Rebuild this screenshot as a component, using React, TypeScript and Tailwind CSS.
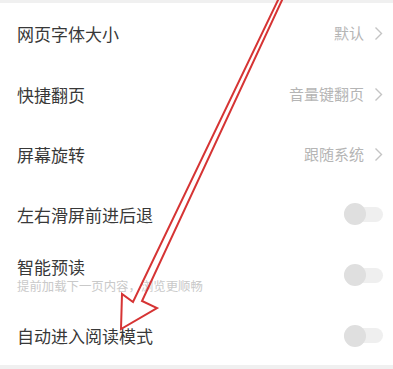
import React from "react";

type Row =
  | { kind: "link"; title: string; value: string; h: string }
  | { kind: "toggle"; title: string; sub?: string; h: string };

const rows: Row[] = [
  { kind: "link", title: "网页字体大小", value: "默认", h: "h-[60px]" },
  { kind: "link", title: "快捷翻页", value: "音量键翻页", h: "h-[62px]" },
  { kind: "link", title: "屏幕旋转", value: "跟随系统", h: "h-[59px]" },
  { kind: "toggle", title: "左右滑屏前进后退", h: "h-[60px]" },
  { kind: "toggle", title: "智能预读", sub: "提前加载下一页内容，浏览更顺畅", h: "h-[62px]" },
  { kind: "toggle", title: "自动进入阅读模式", h: "h-[59px]" },
];

function Chevron() {
  return (
    <svg width="9" height="15" viewBox="0 0 9 15" className="ml-[10px]">
      <path d="M1.5 1.5 L7.5 7.5 L1.5 13.5" fill="none" stroke="#c4c4c4" strokeWidth="1.4" />
    </svg>
  );
}

function Toggle() {
  return (
    <div className="relative w-[39px] h-[22px] flex items-center">
      <div className="w-[39px] h-[15px] rounded-full bg-[#efefef]" />
      <div className="absolute left-0 top-0 w-[22px] h-[22px] rounded-full bg-[#dfdfdf]" />
    </div>
  );
}

export default function App() {
  return (
    <div
      className="relative w-[393px] h-[369px] bg-white overflow-hidden"
      style={{ fontFamily: '"Noto Sans CJK SC", "Noto Sans", sans-serif' }}
    >
      <div className="h-[3px] bg-[#f0f0f0]" />
      {rows.map((r) => (
        <div key={r.title} className={`${r.h} flex items-center justify-between pl-[17px] pr-[10px]`}>
          <div className="flex flex-col">
            <span className="text-[17px] leading-[21px] text-[#383838]">{r.title}</span>
            {r.kind === "toggle" && r.sub && (
              <span className="text-[12.4px] leading-[16px] mt-[1px] text-[#c9c9c9]">{r.sub}</span>
            )}
          </div>
          {r.kind === "link" ? (
            <div className="flex items-center">
              <span className="text-[15px] text-[#b5b5b5]">{r.value}</span>
              <Chevron />
            </div>
          ) : (
            <Toggle />
          )}
        </div>
      ))}
      <div className="absolute bottom-0 left-0 right-0 h-[4px] bg-[#f0f0f0]" />

      <svg className="absolute inset-0 pointer-events-none" width="393" height="369" viewBox="0 0 393 369">
        <path
          d="M279 -2 L283 -2 L142 301 L157 308 L121 329 L122 294 L133 302 Z"
          fill="none"
          stroke="#d63434"
          strokeWidth="2"
          strokeLinejoin="miter"
        />
      </svg>
    </div>
  );
}
